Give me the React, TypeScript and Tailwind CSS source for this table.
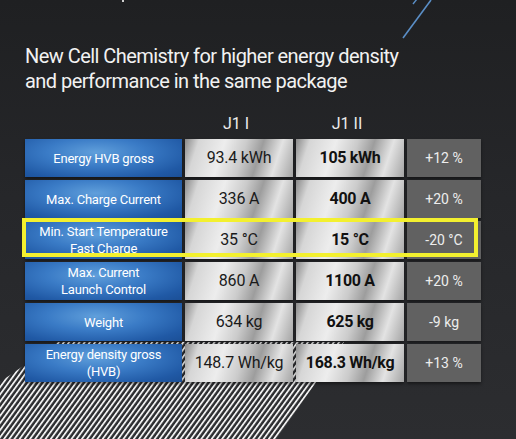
const rows = [
  { label: ["Energy HVB gross"], a: "93.4 kWh", b: "105 kWh", d: "+12 %" },
  { label: ["Max. Charge Current"], a: "336 A", b: "400 A", d: "+20 %" },
  { label: ["Min. Start Temperature", "Fast Charge"], a: "35 °C", b: "15 °C", d: "-20 °C" },
  { label: ["Max. Current", "Launch Control"], a: "860 A", b: "1100 A", d: "+20 %" },
  { label: ["Weight"], a: "634 kg", b: "625 kg", d: "-9 kg" },
  { label: ["Energy density gross", "(HVB)"], a: "148.7 Wh/kg", b: "168.3 Wh/kg", d: "+13 %" },
];

const blue =
  "bg-[radial-gradient(ellipse_at_45%_35%,#609fdb_0%,#3a7bc6_40%,#2059a5_80%,#1b4f96_100%)]";
const silver =
  "bg-[linear-gradient(108deg,#8a8a8a_0%,#d6d6d6_12%,#ededed_34%,#cbcbcb_52%,#9d9d9d_66%,#e3e3e3_82%,#a4a4a4_100%)]";

export default function App() {
  return (
    <div
      className="relative w-[516px] h-[439px] overflow-hidden bg-[linear-gradient(180deg,#1f2022_0%,#26272a_45%,#2c2d30_100%)]"
      style={{ fontFamily: "Roboto, 'Liberation Sans', sans-serif" }}
    >
      {/* hatch decoration behind table */}
      <svg className="absolute left-0 top-0 z-0" width="516" height="439">
        <defs>
          <pattern id="hatch" width="4.2" height="10" patternUnits="userSpaceOnUse" patternTransform="rotate(36)">
            <rect x="0" y="0" width="1.8" height="10" fill="#f0f0f0" />
          </pattern>
        </defs>
        <polygon points="0,382 58,342 344,342 277,439 0,439" fill="url(#hatch)" />
        <line x1="403" y1="38" x2="431" y2="0" stroke="#5a8ec6" strokeWidth="1.6" />
        <line x1="413" y1="4" x2="417" y2="-1" stroke="#5a8ec6" strokeWidth="1.4" />
        <rect x="122" y="0" width="2" height="2" fill="#d0d0d0" />
      </svg>

      <div className="relative z-10 pl-[25px] pt-[44px]">
        <h1 className="text-[20px] leading-[25px] text-[#f2f2f2] tracking-[-0.55px]">
          New Cell Chemistry for higher energy density
          <br />
          and performance in the same package
        </h1>

        <div className="mt-[20px] grid grid-cols-[157px_108px_108px_74px] gap-x-[3px] text-[16px] leading-[20px] text-[#ececec]">
          <div />
          <div className="text-center pr-[6px]">J1 I</div>
          <div className="text-center pr-[6px]">J1 II</div>
          <div />
        </div>

        <div className="mt-[5px] grid grid-cols-[157px_108px_108px_74px] auto-rows-[38px] gap-x-[3px] gap-y-[3px]">
          {rows.map((r, i) => (
            <div key={i} className="contents">
              <div
                className={`${blue} flex flex-col items-center justify-center text-white text-[13px] leading-[17px] tracking-[-0.2px] shadow-[0_2px_3px_rgba(0,0,0,0.45)]`}
              >
                {r.label.map((l) => (
                  <span key={l}>{l}</span>
                ))}
              </div>
              <div
                className={`${silver} flex items-center justify-center text-[#1a1a1a] text-[16px] tracking-[-0.2px] shadow-[0_2px_3px_rgba(0,0,0,0.45)]`}
              >
                {r.a}
              </div>
              <div
                className={`${silver} flex items-center justify-center text-[#111] text-[16px] font-bold tracking-[-0.3px] shadow-[0_2px_3px_rgba(0,0,0,0.45)]`}
              >
                {r.b}
              </div>
              <div className="bg-[#616161] flex items-center justify-center text-[#ededed] text-[14px] shadow-[0_2px_3px_rgba(0,0,0,0.45)]">
                {r.d}
              </div>
            </div>
          ))}
        </div>
      </div>

      {/* highlight box */}
      <div className="absolute z-20 left-[22px] top-[218px] w-[456px] h-[39px] border-[4px] border-[#f3f02f]" />
    </div>
  );
}
